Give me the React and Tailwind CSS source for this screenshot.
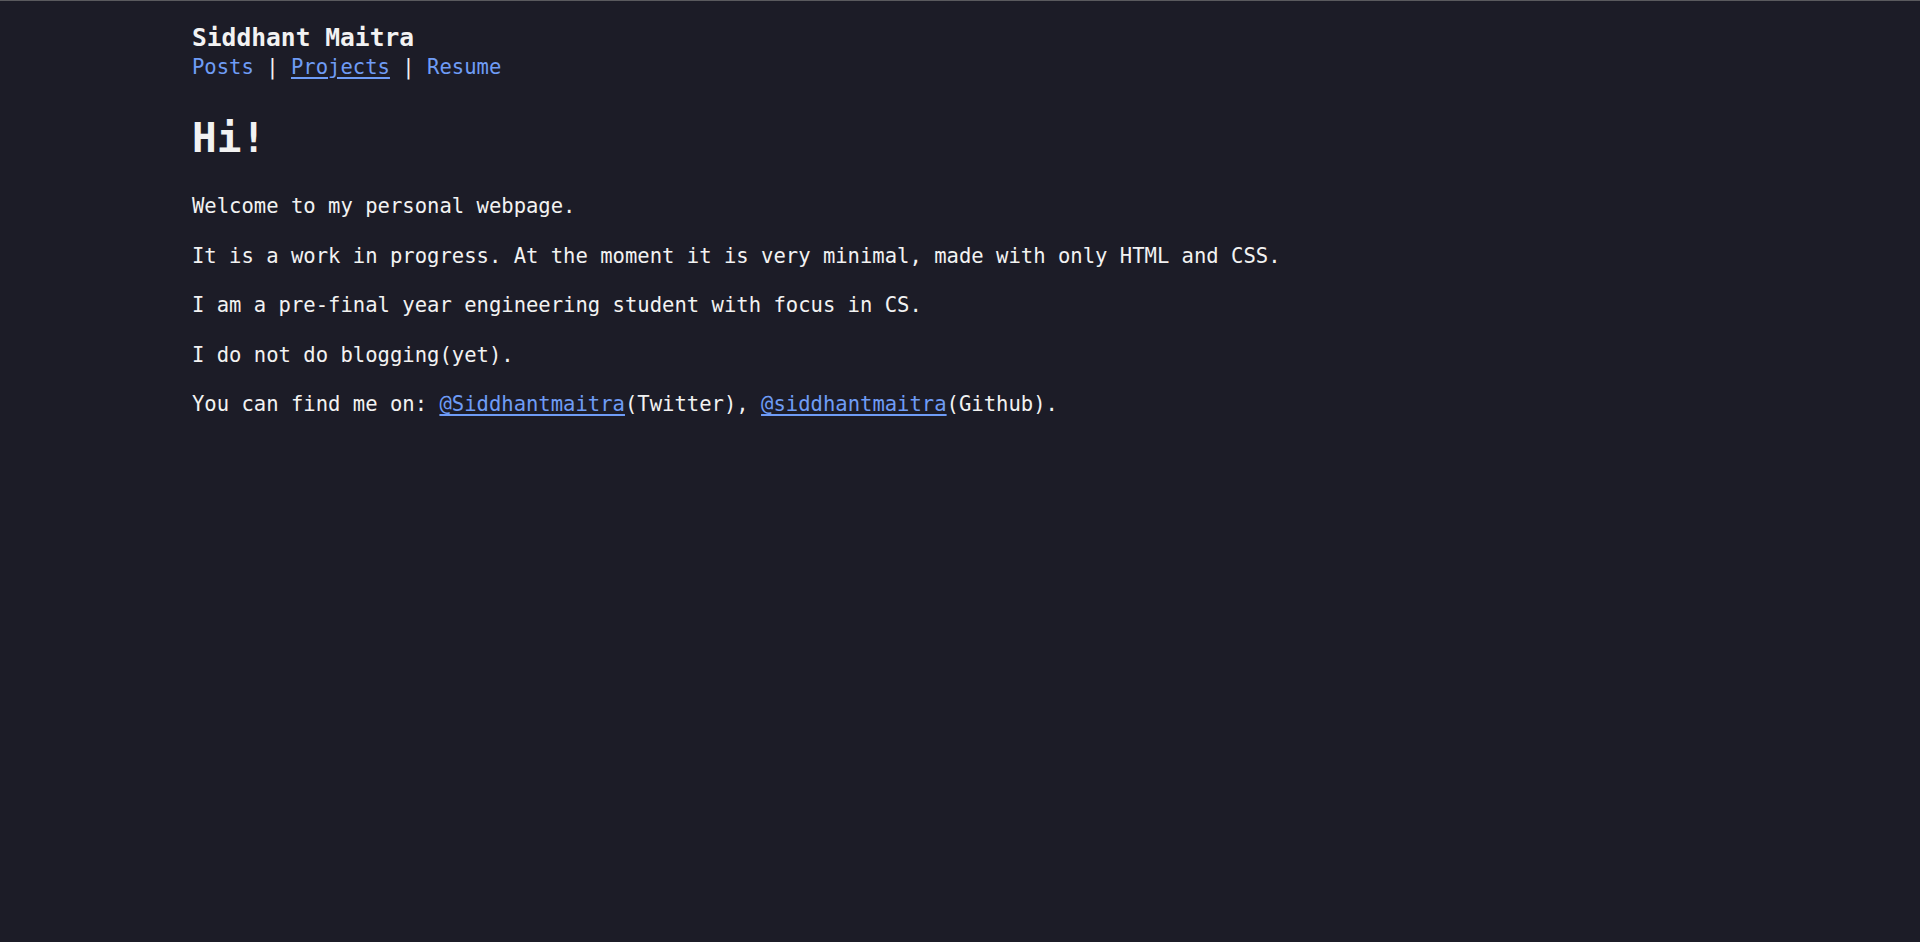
import React from 'react';

const mono = { fontFamily: '"DejaVu Sans Mono", "Liberation Mono", monospace' };

const Link = ({ href, underline, children }) => (
  <a
    href={href}
    className={underline ? 'text-[#6f9cf6] underline underline-offset-[3px]' : 'text-[#6f9cf6]'}
  >
    {children}
  </a>
);

const App = () => {
  return (
    <div className="min-h-screen w-full bg-[#1c1c27] border-t border-[#5a5a5e] text-[#f2f2f2]" style={mono}>
      <div className="pl-[192px] pt-[22px]">
        {/* Header */}
        <header>
          <div className="text-[24.6px] leading-[30px] font-bold">Siddhant Maitra</div>
          <nav className="text-[20.55px] leading-[28px] whitespace-pre">
            <Link href="#posts">Posts</Link>
            {' | '}
            <Link href="#projects" underline>Projects</Link>
            {' | '}
            <Link href="#resume">Resume</Link>
          </nav>
        </header>

        {/* Main */}
        <main className="mt-[33px]">
          <h1 className="text-[41px] leading-[48px] font-bold">Hi!</h1>
          <div className="mt-[31px] flex flex-col gap-[23.6px] text-[20.55px] leading-[26px]">
            <p>Welcome to my personal webpage.</p>
            <p>It is a work in progress. At the moment it is very minimal, made with only HTML and CSS.</p>
            <p>I am a pre-final year engineering student with focus in CS.</p>
            <p>I do not do blogging(yet).</p>
            <p>
              You can find me on: <Link href="#twitter" underline>@Siddhantmaitra</Link>(Twitter),{' '}
              <Link href="#github" underline>@siddhantmaitra</Link>(Github).
            </p>
          </div>
        </main>
      </div>
    </div>
  );
};

export default App;
